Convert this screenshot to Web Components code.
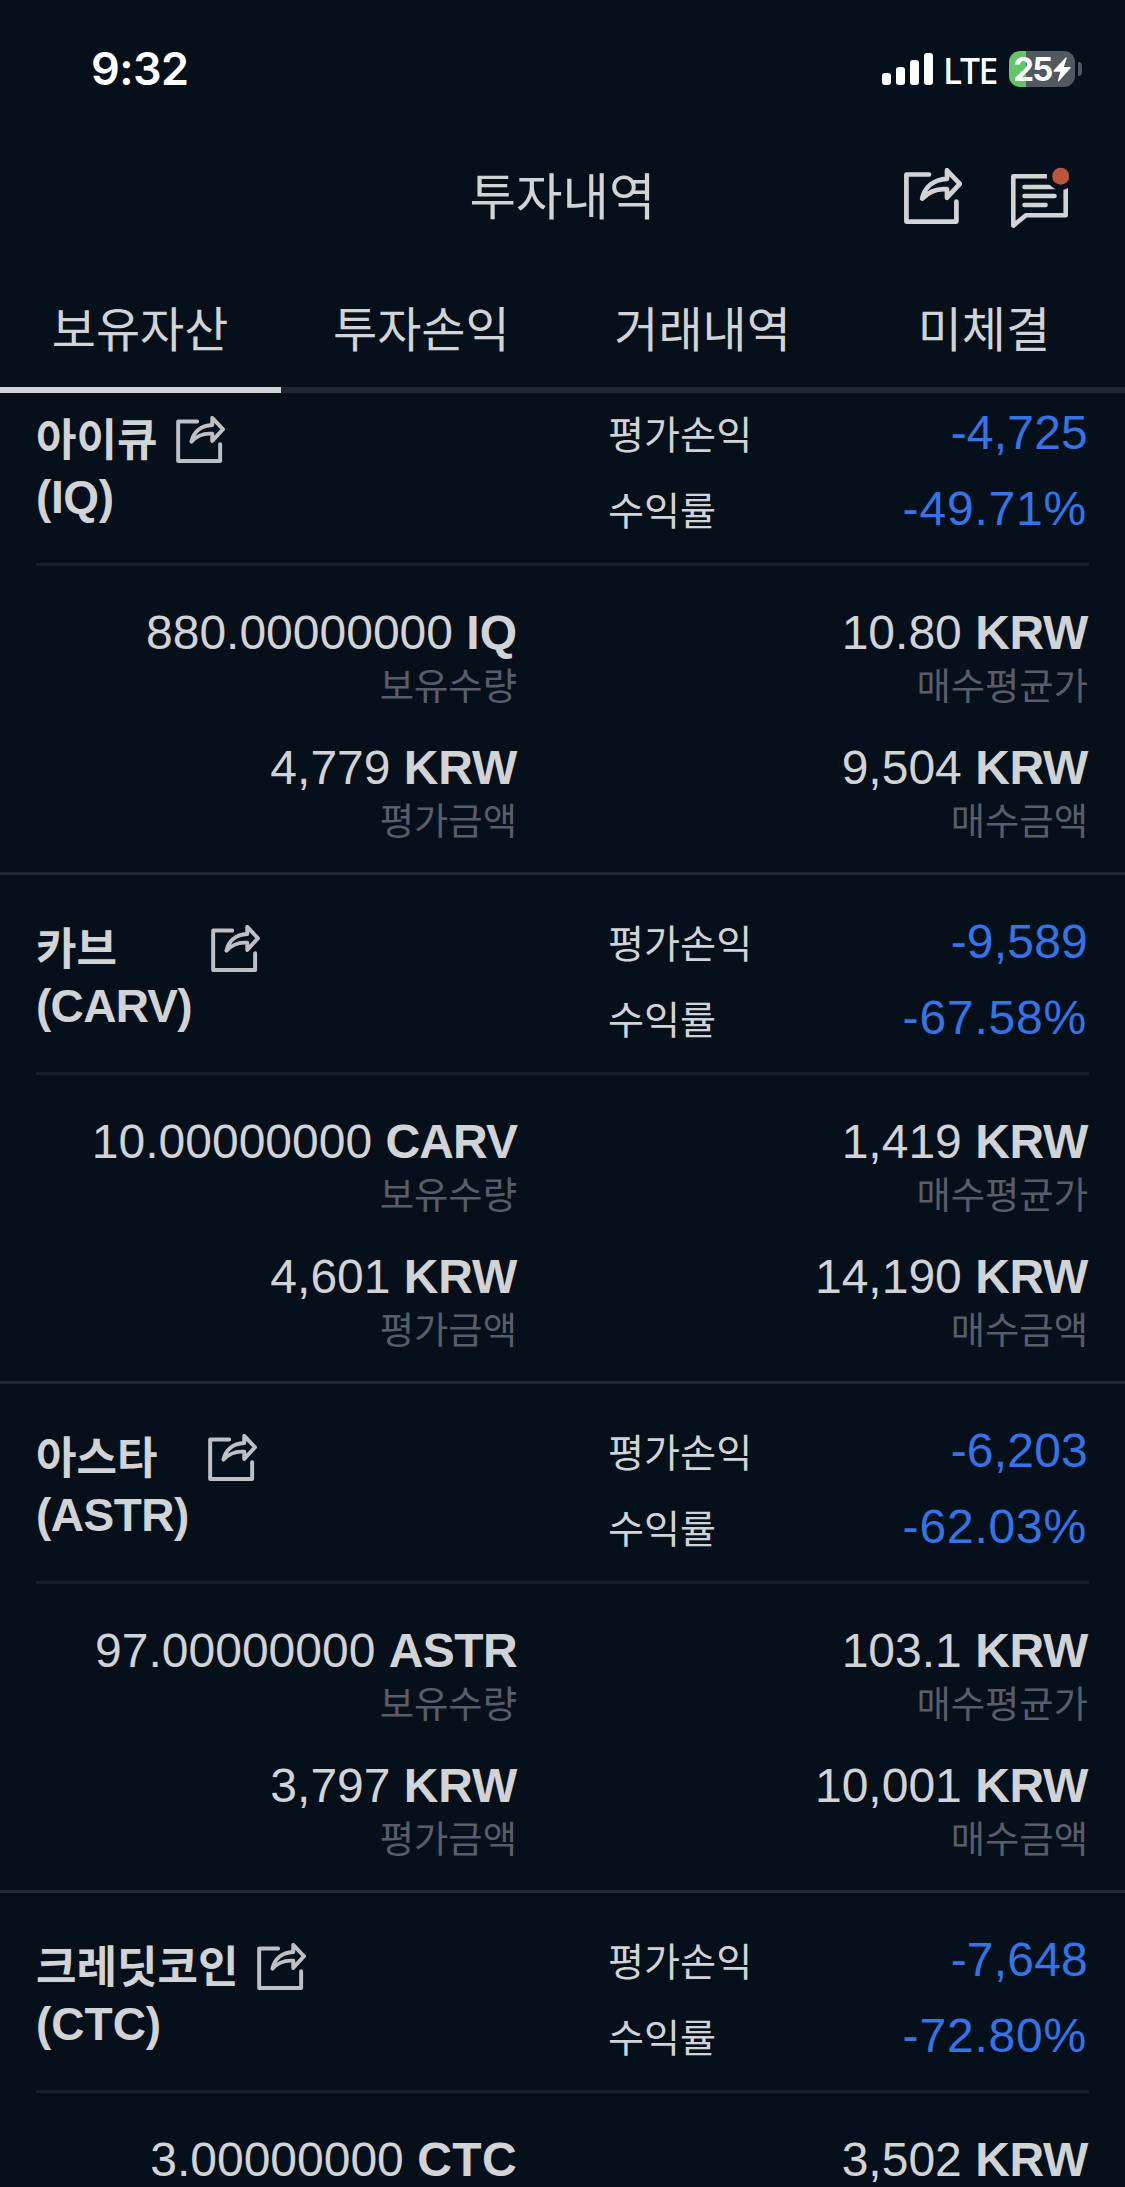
<!DOCTYPE html>
<html lang="ko">
<head>
<meta charset="utf-8">
<title>투자내역</title>
<style>
  html, body { margin: 0; background: #06101b; }
  body {
    --bg: #06101b; --fg: #d2d3d5; --muted: #595d6a; --line: #1f2836; --fall: #3574e8;
    width: 1125px; height: 2187px; overflow: hidden; color: var(--fg);
    font-family: "Liberation Sans", "Noto Sans CJK KR", sans-serif;
  }
</style>
</head>
<body>
<invest-app></invest-app>
<script>
const define = (name, html, setup) => {
  const tpl = document.createElement('template');
  tpl.innerHTML = html;
  customElements.define(name, class extends HTMLElement {
    constructor() {
      super();
      this.attachShadow({ mode: 'open' }).append(tpl.content.cloneNode(true));
    }
    connectedCallback() { if (setup) setup(this, this.shadowRoot); }
  });
};

define('share-icon', `
  <style>
    :host { display: block; width: 58px; height: 56px; color: var(--fg); flex: none; }
    svg { display: block; width: 100%; height: 100%; }
  </style>
  <svg viewBox="0 0 58 56" fill="none" stroke="currentColor" stroke-width="4.7" stroke-linecap="round" stroke-linejoin="round">
    <path d="M25 6.5H2.4V53.6H52.4V33.5"/>
    <path d="M18.2 30.6C20.6 19.5 29 11.5 43 10.8V2.3L55.8 15.8L43 29.7V21.2C33 20.2 25.2 23.2 18.2 30.6Z"/>
  </svg>`);

define('chat-icon', `
  <style>
    :host { display: block; width: 58px; height: 62px; color: var(--fg); flex: none; }
    svg { display: block; overflow: visible; }
  </style>
  <svg width="58" height="62" viewBox="0 -8 58 62" fill="none" stroke="currentColor" stroke-width="4.6" stroke-linecap="round" stroke-linejoin="round">
    <path d="M46 2.2H2.3V51.6L15 41.2H54.7V10"/>
    <path d="M13.5 13H44M13.5 22H43.5M13.5 31H34.5"/>
    <circle cx="49.7" cy="2.3" r="13.8" fill="#06101b" stroke="none"/>
    <circle cx="49.7" cy="2.3" r="8.5" fill="#bb553d" stroke="none"/>
  </svg>`);

define('battery-gauge', `
  <style>
    :host { display: flex; align-items: center; gap: 3px; }
    .cell {
      display: flex; align-items: center; justify-content: center; gap: 1px;
      width: 66px; height: 36px; border-radius: 11px;
      background: linear-gradient(90deg, #65c466 17px, #52585f 17px);
      color: #fff; font: 700 33px/36px Inter, sans-serif; letter-spacing: -1.6px;
    }
    .tip { width: 4px; height: 14px; border-radius: 0 7px 7px 0; background: #52585f; }
  </style>
  <div class="cell"><span>25</span>
    <svg width="18" height="25" viewBox="0 0 18 25" fill="#fff"><path d="M12.6.4 .6 13.400q-.7 1.200.7 1.300H7.300L4.900 23.600q-.1 1.200 1 .6L17.400 11.300q.7-1.200-.7-1.300H10.900L13.700 1.200Q13.600-.2 12.600.4Z"/></svg>
  </div>
  <div class="tip"></div>`);

define('status-bar', `
  <style>
    :host { display: flex; justify-content: space-between; align-items: center; height: 138px;
      box-sizing: border-box; padding: 0 43px 0 91px; color: #fff; font-family: Inter, sans-serif; }
    time { font-size: 45px; font-weight: 600; letter-spacing: -.6px; line-height: 54px; }
    .right { display: flex; align-items: center; }
    .bars { display: flex; align-items: flex-end; gap: 5px; height: 32px; }
    .bars i { width: 9px; border-radius: 3px; background: #fff; }
    .net { box-sizing: border-box; width: 76px; padding-left: 10px; margin-top: 2px; white-space: nowrap;
      font: 500 35.500px/44px "Noto Sans", sans-serif; letter-spacing: -1.3px; }
  </style>
  <time>9:32</time>
  <div class="right">
    <div class="bars"><i style="height:12px"></i><i style="height:18px"></i><i style="height:25px"></i><i style="height:32px"></i></div>
    <span class="net">LTE</span>
    <battery-gauge></battery-gauge>
  </div>`);

define('page-header', `
  <style>
    :host { display: grid; grid-template-columns: 1fr auto 1fr; align-items: center; height: 116px; padding: 0 56px; }
    h1 { grid-column: 2; margin: 0; padding-top: 3px; font-size: 50.500px; font-weight: 400; line-height: 60px; }
    .tools { display: flex; justify-content: flex-end; align-items: flex-start; gap: 49px; padding-top: 4px; }
    chat-icon { margin-top: -2px; }
  </style>
  <h1><slot></slot></h1>
  <div class="tools"><share-icon></share-icon><chat-icon></chat-icon></div>`);

define('tab-bar', `
  <style>:host { display: grid; grid-template-columns: repeat(4, 1fr); height: 139px; }</style>
  <slot></slot>`);

define('tab-item', `
  <style>
    :host { display: flex; align-items: center; justify-content: center; box-sizing: border-box;
      padding: 20px 1px 0 0; border-bottom: 6px solid var(--line); font-size: 48px; line-height: 56px; white-space: nowrap; }
    :host([active]) { border-color: var(--fg); }
  </style>
  <slot></slot>`);

define('amount-cell', `
  <style>
    :host { display: block; text-align: right; white-space: nowrap; }
    .value { padding-top: 1px; font-size: 48px; line-height: 60px; }
    .label { font-size: 37.300px; line-height: 49px; height: 48px; color: var(--muted); }
    b { letter-spacing: var(--track, 0); }
  </style>
  <div class="value"><span class="n"></span> <b></b></div>
  <div class="label"><slot></slot></div>`,
  (el, root) => {
    root.querySelector('.n').textContent = el.getAttribute('value');
    root.querySelector('b').textContent = el.getAttribute('unit');
  });

define('profit-row', `
  <style>
    :host { display: flex; justify-content: space-between; height: 76px; white-space: nowrap; }
    .label { font-size: 39.200px; line-height: 80px; }
    .value { font-size: 48px; line-height: 74px; color: var(--fall); letter-spacing: .2px; }
    :host([rate]) .value { letter-spacing: .8px; padding-right: 1px; }
  </style>
  <span class="label"><slot></slot></span><span class="value"></span>`,
  (el, root) => { root.querySelector('.value').textContent = el.getAttribute('value'); });

define('asset-card', `
  <style>
    :host { display: block; height: 506px; border-bottom: 3px solid var(--line); }
    .pair { display: grid; grid-template-columns: 481px 481px; column-gap: 91px; margin: 0 36px; }
    .body { grid-template-columns: 481px 480px; }
    .head { height: 197px; border-bottom: 3px solid #17202e; }
    .name { display: flex; align-items: flex-start; gap: 19px; padding-top: 45px; }
    h2 { margin: 0; font-size: 44px; line-height: 57px; font-weight: 700; white-space: nowrap; }
    h2 .ko { display: block; padding-top: 1px; }
    h2 .sym { display: block; font-size: 46px; letter-spacing: var(--track, 0); }
    share-icon { width: 49px; height: 47px; margin-top: 5px; --fg: #bfc0c4; }
    .profit { padding: 30px 1px 0 0; }
    .body { padding-top: 36px; row-gap: 26px; }
  </style>
  <div class="pair head">
    <div class="name"><h2><span class="ko"></span><span class="sym"></span></h2><share-icon></share-icon></div>
    <div class="profit"></div>
  </div>
  <div class="pair body"></div>`,
  (el, root) => {
    const d = el.dataset;
    root.querySelector('.ko').textContent = d.name;
    root.querySelector('.sym').textContent = '(' + d.symbol + ')';
    root.querySelector('.profit').innerHTML =
      `<profit-row value="${d.profit}">평가손익</profit-row><profit-row rate value="${d.rate}">수익률</profit-row>`;
    root.querySelector('.body').innerHTML =
      `<amount-cell style="--track:${d.unitTrack || 0}" value="${d.qty}" unit="${d.symbol}">보유수량</amount-cell>
       <amount-cell style="--track:-.3px" value="${d.avg}" unit="KRW">매수평균가</amount-cell>` +
      (d.worth ? `<amount-cell style="--track:-.2px" value="${d.worth}" unit="KRW">평가금액</amount-cell>
       <amount-cell style="--track:-.3px" value="${d.cost}" unit="KRW">매수금액</amount-cell>` : '');
  });

define('asset-list', `
  <style>
    :host { display: block; flex: 1; min-height: 0; overflow: hidden; }
    .scrolled { margin-top: -27px; }
  </style>
  <div class="scrolled"><slot></slot></div>`);

define('invest-app', `
  <style>:host { display: flex; flex-direction: column; width: 1125px; height: 2187px; overflow: hidden; background: var(--bg); }</style>
  <status-bar></status-bar>
  <page-header>투자내역</page-header>
  <tab-bar><tab-item active>보유자산</tab-item><tab-item>투자손익</tab-item><tab-item>거래내역</tab-item><tab-item>미체결</tab-item></tab-bar>
  <asset-list>
    <asset-card style="--track:-.4px" data-name="아이큐" data-symbol="IQ" data-profit="-4,725" data-rate="-49.71%" data-qty="880.00000000" data-avg="10.80" data-worth="4,779" data-cost="9,504"></asset-card>
    <asset-card style="--track:-.7px" data-unit-track="-.9px" data-name="카브" data-symbol="CARV" data-profit="-9,589" data-rate="-67.58%" data-qty="10.00000000" data-avg="1,419" data-worth="4,601" data-cost="14,190"></asset-card>
    <asset-card style="--track:-.5px" data-unit-track="-.6px" data-name="아스타" data-symbol="ASTR" data-profit="-6,203" data-rate="-62.03%" data-qty="97.00000000" data-avg="103.1" data-worth="3,797" data-cost="10,001"></asset-card>
    <asset-card data-unit-track=".4px" data-name="크레딧코인" data-symbol="CTC" data-profit="-7,648" data-rate="-72.80%" data-qty="3.00000000" data-avg="3,502"></asset-card>
  </asset-list>`);
</script>
</body>
</html>
